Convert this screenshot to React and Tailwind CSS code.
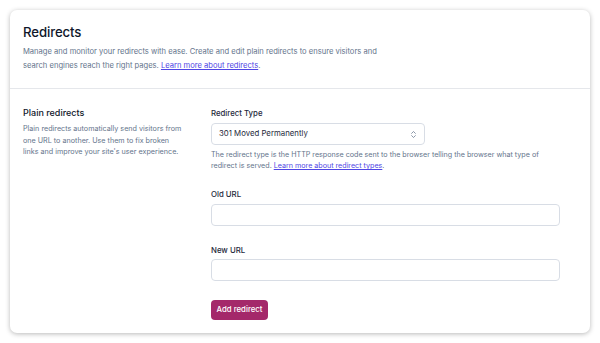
import React from "react";

function ChevronsUpDown() {
  return (
    <svg width="9" height="11" viewBox="0 0 24 24" fill="none" stroke="#64748b" strokeWidth="2" strokeLinecap="round" strokeLinejoin="round">
      <path d="m7 15 5 5 5-5" />
      <path d="m7 9 5-5 5 5" />
    </svg>
  );
}

export default function App() {
  return (
    <div className="w-[600px] h-[343px] bg-white p-[10px] font-['Inter',sans-serif]">
      <div className="h-[323px] w-[580px] rounded-[7px] bg-white shadow-[0_1px_5px_rgba(0,0,0,0.28)] overflow-hidden">
        <div className="h-[79px] border-b border-[#e5e7eb] px-[13px] pt-[14px]">
          <h1 className="text-[13.2px] leading-[17px] font-medium tracking-[-0.1px] text-[#0f172a]">Redirects</h1>
          <p className="mt-[4px] text-[7.6px] leading-[13.5px] text-[#64748b]">
            Manage and monitor your redirects with ease. Create and edit plain redirects to ensure visitors and
            <br />
            search engines reach the right pages.{" "}
            <a className="text-[#4f46e5] underline">Learn more about redirects</a>.
          </p>
        </div>
        <div className="flex px-[13px] pt-[17px]">
          <div className="w-[188px] shrink-0">
            <h2 className="text-[9px] leading-[14px] font-medium text-[#0f172a]">Plain redirects</h2>
            <p className="mt-[3px] text-[7.2px] leading-[11.7px] text-[#64748b] whitespace-nowrap">
              Plain redirects automatically send visitors from
              <br />
              one URL to another. Use them to fix broken
              <br />
              links and improve your site's user experience.
            </p>
          </div>
          <div className="w-[349px] flex flex-col items-start">
            <label className="text-[7.8px] leading-[14px] font-medium text-[#1e293b]">Redirect Type</label>
            <div className="mt-[3px] h-[22px] w-[214px] rounded-[4px] border border-[#d8dde5] flex items-center justify-between pl-[7px] pr-[6px]">
              <span className="text-[7.8px] text-[#1e293b]">301 Moved Permanently</span>
              <ChevronsUpDown />
            </div>
            <p className="mt-[4px] text-[7.15px] leading-[11px] text-[#64748b]">
              The redirect type is the HTTP response code sent to the browser telling the browser what type of
              <br />
              redirect is served.{" "}
              <a className="text-[#4f46e5] underline">Learn more about redirect types</a>.
            </p>
            <label className="mt-[16px] text-[7.8px] leading-[14px] font-medium text-[#1e293b]">Old URL</label>
            <div className="mt-[3px] h-[22px] w-[349px] rounded-[4px] border border-[#d8dde5]" />
            <label className="mt-[17px] text-[7.8px] leading-[14px] font-medium text-[#1e293b]">New URL</label>
            <div className="mt-[2px] h-[22px] w-[349px] rounded-[4px] border border-[#d8dde5]" />
            <button className="mt-[19px] h-[20px] w-[57px] rounded-[4px] bg-[#a4286a] text-[7.8px] font-medium text-white">
              Add redirect
            </button>
          </div>
        </div>
      </div>
    </div>
  );
}
